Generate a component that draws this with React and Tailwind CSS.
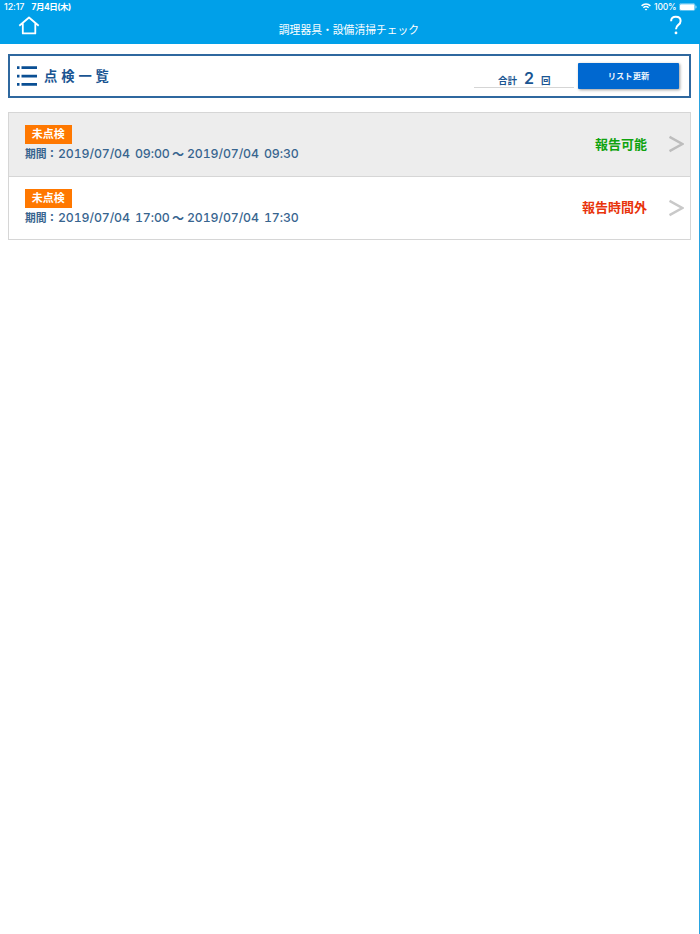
const rows = [
  { date: '2019/07/04', from: '09:00', to: '09:30', status: '報告可能', style: 'text-[#0fa30f]', bg: 'bg-[#ededed]', arrow: '#bdbdbd' },
  { date: '2019/07/04', from: '17:00', to: '17:30', status: '報告時間外', style: 'text-[#e8340c]', bg: 'bg-white', arrow: '#c9c9c9' },
];

function Header() {
  return (
    <header className="h-[44px] bg-[#00a0e9] text-white">
      <div className="flex h-[14px] items-center justify-between pl-[4px] pr-[3px] text-[9px] leading-[14px] font-medium">
        <div className="flex gap-[7px]">
          <span className="tracking-[-0.1px]">12:17</span>
          <span className="text-[8.5px] font-bold tracking-[-0.45px]">7月4日(木)</span>
        </div>
        <div className="flex items-center gap-[3px]">
          <svg width="10" height="8" viewBox="0 0 10 8" fill="none" stroke="white" strokeWidth="1.5">
            <path d="M.6 2.9C3.1.5 6.9.5 9.4 2.9M2.4 4.8c1.5-1.4 3.7-1.4 5.2 0" />
            <path d="M5 7.6 3.6 6.2c.8-.7 2-.7 2.8 0Z" fill="white" stroke="none" />
          </svg>
          <span className="w-[22px] text-[8.5px] tracking-[-0.15px]">100%</span>
          <svg width="18" height="8" viewBox="0 0 18 8">
            <rect x=".4" y=".4" width="15.6" height="7.2" rx="2" fill="none" stroke="white" strokeOpacity=".5" strokeWidth=".8" />
            <rect x="1" y="1.2" width="14.4" height="5.8" rx="1" fill="white" />
            <path d="M17 2.8v2.4" stroke="white" strokeOpacity=".6" />
          </svg>
        </div>
      </div>
      <div className="grid h-[30px] grid-cols-[60px_1fr_60px] items-start">
        <svg className="mt-[2px] ml-[18px]" width="22" height="19" viewBox="0 0 22 19" fill="none" stroke="white" strokeWidth="1.8">
          <path d="M1.3 9.8 11 1.5l9.7 8.3M4.8 7.6v9.8h12.5V7.6" strokeLinejoin="round" />
        </svg>
        <h1 className="mt-[8px] pr-[2px] text-center text-[10.8px] leading-[17px] font-normal">調理器具・設備清掃チェック</h1>
        <svg className="mt-[1px] ml-[29px]" width="14" height="20" viewBox="0 0 14 20" fill="none" stroke="white" strokeWidth="2">
          <path d="M2.1 6.2C2.1 3.2 4 1.7 6.8 1.7c2.9 0 4.8 1.6 4.8 4.2 0 2-1 3-2.5 4.2C7.600 11.300 7 12 7 14.300" />
          <circle cx="7" cy="17.900" r="1.400" fill="white" stroke="none" />
        </svg>
      </div>
    </header>
  );
}

export default function App() {
  return (
    <div className="h-[934px] w-[700px] bg-white font-['Inter','Noto_Sans_CJK_JP',sans-serif]">
      <Header />
      <div className="h-[890px] border-r border-[#2aa3e0] pt-[10px] pr-[8px] pl-[8px]">
        <section className="flex h-[44px] items-start border-2 border-[#2f689f] pr-[10px] pl-[7px] text-[#1a5592]">
          <svg className="mt-[10px]" width="20" height="20" viewBox="0 0 20 20" fill="#0a4f94">
            <path d="M0 .3h2.500v2.700H0zM4.500.3H20v2.700H4.500zM0 8.700h2.500v2.700H0zM4.500 8.700H20v2.700H4.500zM0 17h2.500v2.700H0zM4.500 17H20v2.700H4.500z" />
          </svg>
          <h2 className="mt-[10px] ml-[7px] text-[13.3px] leading-[20px] font-bold tracking-[3.9px]">点検一覧</h2>
          <div className="mt-[13px] ml-auto flex h-[19px] w-[100px] items-baseline border-b border-[#d5d5d5] pl-[24px] text-[9.500px] leading-[18px] font-bold">
            <span>合計</span>
            <span className="ml-[7px] w-[10px] text-[16px] leading-[18px] font-semibold">2</span>
            <span className="ml-[7px]">回</span>
          </div>
          <button className="mt-[7px] ml-[4px] h-[26px] w-[101px] rounded-[1px] bg-[#0068d0] text-[8.3px] font-bold text-white/95 shadow-[1px_1px_3px_#999]">リスト更新</button>
        </section>
        <ul className="mt-[14px] border border-[#d6d6d6]">
          {rows.map((r, i) => (
            <li key={r.from} className={`flex items-start pr-[6px] pl-[16px] ${r.bg} ${i === 0 ? 'h-[64px] border-b border-[#d6d6d6]' : 'h-[62px]'}`}>
              <div className={i === 0 ? 'mt-[12px]' : 'mt-[11.5px]'}>
                <div className="flex h-[19px] w-[46.5px] items-center justify-center bg-[#ff7800] text-[11px] font-bold text-white">未点検</div>
                <p className="flex text-[12.3px] leading-[20px] font-medium whitespace-nowrap text-[#38658f] tabular-nums">
                  <span className="w-[33px] text-[10.800px] leading-[22px] font-bold">期間：</span>
                  <span className="w-[77px] tracking-[-0.1px]">{r.date}</span>
                  <span className="w-[37px] tracking-[-0.1px]">{r.from}</span>
                  <span className="w-[15px] text-[12px] leading-[21px] font-bold">〜</span>
                  <span className="w-[77px] tracking-[-0.1px]">{r.date}</span>
                  <span className="tracking-[-0.1px]">{r.to}</span>
                </p>
              </div>
              <span className={`mr-[22px] ml-auto text-[13px] leading-[20px] font-bold ${r.style} ${i === 0 ? 'mt-[21px]' : 'mt-[20px]'}`}>{r.status}</span>
              <svg className="mt-[22px]" width="15" height="18" viewBox="0 0 15 18" fill="none" stroke={r.arrow} strokeWidth="2.400">
                <path d="M.5 1.800 13.300 9 .5 16.200" />
              </svg>
            </li>
          ))}
        </ul>
      </div>
    </div>
  );
}
